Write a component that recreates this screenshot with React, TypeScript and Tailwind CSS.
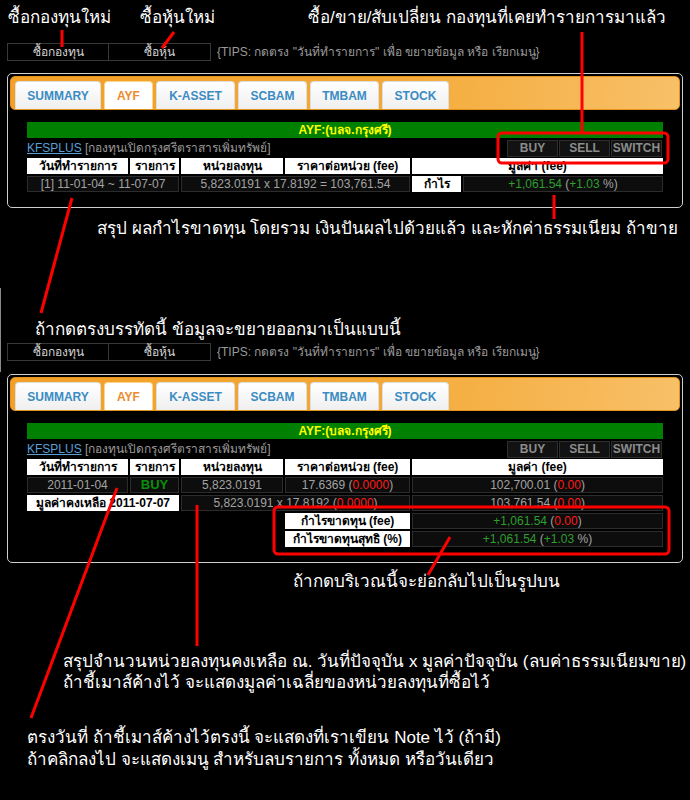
import React from "react";

const tabs = [
  { label: "SUMMARY", w: "w-[86px]", active: false },
  { label: "AYF", w: "w-[49px]", active: true },
  { label: "K-ASSET", w: "w-[79px]", active: false },
  { label: "SCBAM", w: "w-[69px]", active: false },
  { label: "TMBAM", w: "w-[69px]", active: false },
  { label: "STOCK", w: "w-[67px]", active: false },
];

const head = "h-[16px] bg-white text-black font-bold text-[12px] leading-[16px] text-center whitespace-nowrap";
const cell = "h-[16px] bg-[#0d0d0d] border border-[#2c2c2c] text-[#a3a3a3] text-[12px] leading-[14px] text-center whitespace-nowrap";
const note = "h-[20px] leading-[20px] text-white text-[17px] whitespace-nowrap";
const line = "h-[21px] leading-[21px] text-white text-[17px] whitespace-nowrap";

function ActionRow() {
  return (
    <div className="flex items-center h-[18px] pl-[7px]">
      <div className="w-[102px] h-[18px] border border-[#383838] text-[#d4d4d4] text-[12px] leading-[16px] text-center">ซื้อกองทุน</div>
      <div className="w-[102px] h-[18px] border border-l-0 border-[#383838] text-[#d4d4d4] text-[12px] leading-[16px] text-center">ซื้อหุ้น</div>
      <div className="ml-[6px] text-[#9a9a9a] text-[12px] whitespace-nowrap">
        {'{TIPS: กดตรง "วันที่ทำรายการ" เพื่อ ขยายข้อมูล หรือ เรียกเมนู}'}
      </div>
    </div>
  );
}

function TabBar() {
  return (
    <div className="h-[34px] rounded-[5px] border border-[#e3921a] bg-[linear-gradient(100deg,#f2a027_0%,#f4a936_55%,#f8c068_100%)] pl-[4px] pt-[4px] flex items-stretch gap-[3px] overflow-hidden">
      {tabs.map((t) => (
        <div
          key={t.label}
          className={
            t.active
              ? `${t.w} rounded-t-[4px] flex items-center justify-center text-[12px] font-bold bg-white text-[#ec8b2c] border border-b-0 border-[#fcd58c]`
              : `${t.w} rounded-t-[4px] flex items-center justify-center text-[12px] font-bold bg-[linear-gradient(#ffffff,#efefef)] text-[#3a8cc3] border border-b-0 border-[#dedede]`
          }
        >
          {t.label}
        </div>
      ))}
    </div>
  );
}

function FundHead() {
  return (
    <>
      <div className="col-span-5 h-[16px] bg-[#008000] text-[#ffff00] font-bold text-[12px] leading-[16px] text-center">
        AYF:(บลจ.กรุงศรี)
      </div>
      <div className="col-span-5 h-[16px] flex items-center justify-between">
        <div className="text-[12px] whitespace-nowrap">
          <span className="text-[#5a9fd6] underline">KFSPLUS</span>
          <span className="text-[#9a9a9a]"> [กองทุนเปิดกรุงศรีตราสารเพิ่มทรัพย์]</span>
        </div>
        <div className="flex gap-[1px] mr-[1px]">
          {["BUY", "SELL", "SWITCH"].map((b) => (
            <div key={b} className="w-[51px] h-[17px] bg-[#121212] border border-[#2e2e2e] text-[#8c8c8c] font-bold text-[12px] leading-[15px] text-center">
              {b}
            </div>
          ))}
        </div>
      </div>
      <div className={head}>วันที่ทำรายการ</div>
      <div className={head}>รายการ</div>
      <div className={head}>หน่วยลงทุน</div>
      <div className={head}>ราคาต่อหน่วย (fee)</div>
      <div className={head}>มูลค่า (fee)</div>
    </>
  );
}

function Panel({ children }: { children: React.ReactNode }) {
  return (
    <div className="mx-[7px] rounded-[5px] border border-[#cfcfcf] bg-black p-[2px] pb-[15px]">
      <TabBar />
      <div className="mt-[12px] px-[17px] grid grid-cols-[101px_49px_102px_125px_251px] gap-x-[2px] gap-y-[2px]">
        {children}
      </div>
    </div>
  );
}

const G = ({ children }: { children: React.ReactNode }) => <span className="text-[#2f9e2f]">{children}</span>;
const R = ({ children }: { children: React.ReactNode }) => <span className="text-[#ff1a1a]">{children}</span>;

function Overlay() {
  return (
    <svg className="absolute inset-0 pointer-events-none" width="690" height="800" viewBox="0 0 690 800">
      <line x1="0.5" y1="288" x2="0.5" y2="372" stroke="#8a8a8a" strokeWidth="1" />
      <g stroke="#ff0000" strokeWidth="3" fill="none" strokeLinecap="butt">
        <line x1="62" y1="30" x2="62" y2="47" />
        <line x1="174" y1="32" x2="162" y2="48" />
        <line x1="582" y1="32" x2="582" y2="133" />
        <rect x="498" y="133" width="170" height="30" rx="4" />
        <line x1="554" y1="195" x2="554" y2="219" />
        <line x1="72" y1="198" x2="41" y2="313" />
        <rect x="274" y="507" width="395" height="47" rx="4" />
        <line x1="450" y1="537" x2="428" y2="575" />
        <line x1="117" y1="488" x2="31" y2="718" />
        <line x1="197" y1="505" x2="197" y2="646" />
      </g>
    </svg>
  );
}

export default function App() {
  return (
    <div className="relative w-[690px] h-[800px] bg-black overflow-hidden font-['Liberation_Sans',Tahoma,sans-serif]">
      <div className={`${note} mt-[8px] flex`}>
        <span className="pl-[8px] w-[140px]">ซื้อกองทุนใหม่</span>
        <span className="w-[168px]">ซื้อหุ้นใหม่</span>
        <span>ซื้อ/ขาย/สับเปลี่ยน กองทุนที่เคยทำรายการมาแล้ว</span>
      </div>

      <div className="mt-[15px]">
        <ActionRow />
      </div>

      <div className="mt-[12px]">
        <Panel>
          <FundHead />
          <div className={`${cell} col-span-2`}>[1] 11-01-04 ~ 11-07-07</div>
          <div className={`${cell} col-span-2`}>5,823.0191 x 17.8192 = 103,761.54</div>
          <div className="flex gap-[2px]">
            <div className={`${head} w-[49px]`}>กำไร</div>
            <div className={`${cell} flex-1`}>
              <G>+1,061.54</G> (<G>+1.03</G> %)
            </div>
          </div>
        </Panel>
      </div>

      <div className={`${note} mt-[11px] pl-[97px]`}>สรุป ผลกำไรขาดทุน โดยรวม เงินปันผลไปด้วยแล้ว และหักค่าธรรมเนียม ถ้าขาย</div>

      <div className={`${note} mt-[81px] pl-[35px]`}>ถ้ากดตรงบรรทัดนี้ ข้อมูลจะขยายออกมาเป็นแบบนี้</div>

      <div className="mt-[3px]">
        <ActionRow />
      </div>

      <div className="mt-[13px]">
        <Panel>
          <FundHead />
          <div className={cell}>2011-01-04</div>
          <div className={`${cell} !text-[#0a8f0a] font-bold !text-[13px]`}>BUY</div>
          <div className={cell}>5,823.0191</div>
          <div className={cell}>
            17.6369 (<R>0.0000</R>)
          </div>
          <div className={cell}>
            102,700.01 (<R>0.00</R>)
          </div>

          <div className={`${head} col-span-2`}>มูลค่าคงเหลือ 2011-07-07</div>
          <div className={`${cell} col-span-2`}>
            5,823.0191 x 17.8192 (<R>0.0000</R>)
          </div>
          <div className={cell}>
            103,761.54 (<R>0.00</R>)
          </div>

          <div className="col-span-3" />
          <div className={head}>กำไรขาดทุน (fee)</div>
          <div className={cell}>
            <G>+1,061.54</G> (<R>0.00</R>)
          </div>

          <div className="col-span-3" />
          <div className={head}>กำไรขาดทุนสุทธิ (%)</div>
          <div className={cell}>
            <G>+1,061.54</G> (<G>+1.03</G> %)
          </div>
        </Panel>
      </div>

      <div className={`${note} mt-[9px] pl-[293px]`}>ถ้ากดบริเวณนี้จะย่อกลับไปเป็นรูปบน</div>

      <div className="mt-[59px] pl-[63px]">
        <div className={line}>สรุปจำนวนหน่วยลงทุนคงเหลือ ณ. วันที่ปัจจุบัน x มูลค่าปัจจุบัน (ลบค่าธรรมเนียมขาย)</div>
        <div className={line}>ถ้าชี้เมาส์ค้างไว้ จะแสดงมูลค่าเฉลี่ยของหน่วยลงทุนที่ซื้อไว้</div>
      </div>

      <div className="mt-[34px] pl-[27px]">
        <div className="h-[22px] leading-[22px] text-white text-[17px] whitespace-nowrap">ตรงวันที่ ถ้าชี้เมาส์ค้างไว้ตรงนี้ จะแสดงที่เราเขียน Note ไว้ (ถ้ามี)</div>
        <div className="h-[22px] leading-[22px] text-white text-[17px] whitespace-nowrap">ถ้าคลิกลงไป จะแสดงเมนู สำหรับลบรายการ ทั้งหมด หรือวันเดียว</div>
      </div>

      <Overlay />
    </div>
  );
}
